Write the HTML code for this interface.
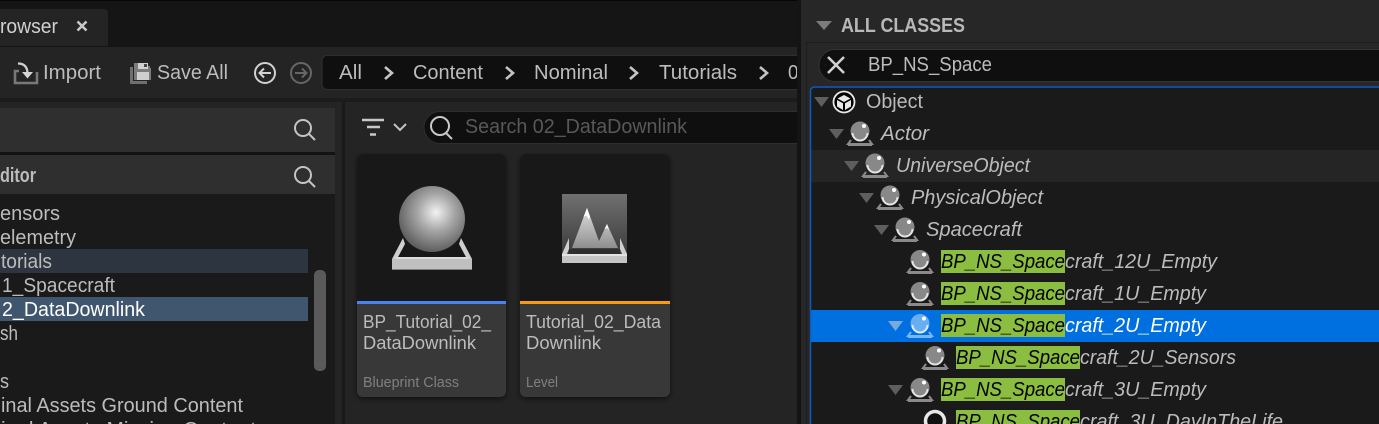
<!DOCTYPE html>
<html lang="en">
<head>
<meta charset="utf-8">
<title>Content Browser</title>
<style>
html,body{margin:0;padding:0;width:1379px;height:424px;overflow:hidden;background:#151515}
svg{display:block}
text{font-family:"Liberation Sans",sans-serif;font-size:20px;fill:#bcbcbc;white-space:pre}
.i{font-style:italic}
.b{font-weight:bold}
</style>
</head>
<body>
<svg width="1379" height="424" viewBox="0 0 1379 424" xmlns="http://www.w3.org/2000/svg">
<defs>
<linearGradient id="tl" x1="0" x2="1" y1="0" y2="0"><stop offset="0" stop-color="#0a62c8"/><stop offset="1" stop-color="#2a2a2a"/></linearGradient>
<radialGradient id="sph" cx="0.56" cy="0.4" r="0.62"><stop offset="0" stop-color="#f2f2f2"/><stop offset="0.45" stop-color="#a6a6a6"/><stop offset="1" stop-color="#5a5a5a"/></radialGradient>
<linearGradient id="lv" x1="0" x2="0" y1="0" y2="1"><stop offset="0" stop-color="#707070"/><stop offset="1" stop-color="#3c3c3c"/></linearGradient>
<linearGradient id="mt" x1="0" x2="0" y1="0" y2="1"><stop offset="0" stop-color="#e0e0e0"/><stop offset="1" stop-color="#8e8e8e"/></linearGradient>
<filter id="sh" x="-10%" y="-10%" width="120%" height="120%"><feDropShadow dx="0" dy="2" stdDeviation="3" flood-color="#000" flood-opacity="0.55"/></filter>
</defs>

<!-- base -->
<rect width="1379" height="424" fill="#151515"/>
<rect width="800" height="1" fill="#050505"/>

<!-- tab -->
<path d="M0 9H104a4 4 0 0 1 4 4V46H0Z" fill="#242424"/>
<path d="M0 9.500H104" stroke="url(#tl)" stroke-width="1" fill="none"/>
<text x="0" y="33" textLength="58" lengthAdjust="spacingAndGlyphs" style="fill:#d0d0d0">rowser</text>
<path d="M77.500 21.500l9 9M86.500 21.500l-9 9" stroke="#c8c8c8" stroke-width="2.600" fill="none"/>

<!-- toolbar and content backdrop -->
<rect x="0" y="47" width="798" height="377" fill="#242424"/>
<rect x="0" y="98" width="798" height="4" fill="#1c1c1c"/>

<!-- import -->
<path d="M19 71h-4v12h22V72" stroke="#787878" stroke-width="2.600" fill="none"/>
<path d="M18 63.500c6 0 9 3 9.500 9" stroke="#d0d0d0" stroke-width="2.200" fill="none"/>
<path d="M22 72h11l-5.500 6.500z" fill="#d4d4d4"/>
<text x="43" y="79" textLength="58" lengthAdjust="spacingAndGlyphs">Import</text>

<!-- save all -->
<path d="M130 67h3v14h14v3h-17z" fill="#6f6f6f"/>
<path d="M134 63h13v3h3v2h1v12h-17z" fill="#7c7c7c"/>
<rect x="138" y="63" width="10" height="6" fill="#cfcfcf"/>
<rect x="137" y="72" width="12" height="8" fill="#cfcfcf"/>
<rect x="144" y="64" width="3" height="3" fill="#444"/>
<text x="157" y="79" textLength="71" lengthAdjust="spacingAndGlyphs">Save All</text>

<!-- nav -->
<circle cx="265" cy="73" r="10" fill="none" stroke="#d2d2d2" stroke-width="2"/>
<path d="M271 73h-11M264 68.500L259.500 73l4.500 4.500" fill="none" stroke="#d2d2d2" stroke-width="2"/>
<circle cx="301" cy="73" r="10" fill="none" stroke="#666" stroke-width="2"/>
<path d="M295 73h11M302 68.500L306.500 73l-4.500 4.500" fill="none" stroke="#666" stroke-width="2"/>

<!-- breadcrumb -->
<rect x="322" y="55.500" width="490" height="34" rx="5" fill="#0f0f0f" stroke="#2f2f2f"/>
<text x="339" y="79" textLength="23" lengthAdjust="spacingAndGlyphs">All</text>
<path d="M385 67l7 6-7 6" fill="none" stroke="#c4c4c4" stroke-width="2.600"/>
<text x="413" y="79" textLength="70" lengthAdjust="spacingAndGlyphs">Content</text>
<path d="M506 67l7 6-7 6" fill="none" stroke="#c4c4c4" stroke-width="2.600"/>
<text x="534" y="79" textLength="74" lengthAdjust="spacingAndGlyphs">Nominal</text>
<path d="M630 67l7 6-7 6" fill="none" stroke="#c4c4c4" stroke-width="2.600"/>
<text x="659" y="79" textLength="78" lengthAdjust="spacingAndGlyphs">Tutorials</text>
<path d="M760 67l7 6-7 6" fill="none" stroke="#c4c4c4" stroke-width="2.600"/>
<text x="788" y="79" textLength="21" lengthAdjust="spacingAndGlyphs">02</text>

<!-- left sources panel -->
<rect x="0" y="108" width="335" height="44" fill="#2f2f2f"/>
<rect x="0" y="152" width="335" height="3" fill="#131313"/>
<rect x="0" y="155" width="335" height="39" fill="#2f2f2f"/>
<rect x="0" y="194" width="335" height="230" fill="#1a1a1a"/>
<rect x="342" y="102" width="3" height="322" fill="#191919"/>
<g fill="none" stroke="#c4c4c4" stroke-width="2"><circle cx="303" cy="128" r="8"/><path d="M309 134l6 6"/><circle cx="303" cy="175" r="8"/><path d="M309 181l6 6"/></g>
<text x="0" y="182" textLength="36" lengthAdjust="spacingAndGlyphs" class="b">ditor</text>
<rect x="0" y="249" width="308" height="24" fill="#2d3640"/>
<rect x="0" y="297" width="308" height="24" fill="#40566e"/>
<rect x="314" y="270" width="12" height="101" rx="5" fill="#5a5a5a"/>
<text x="0" y="220" textLength="60" lengthAdjust="spacingAndGlyphs">ensors</text>
<text x="0" y="244" textLength="76" lengthAdjust="spacingAndGlyphs">elemetry</text>
<text x="1" y="268" textLength="51" lengthAdjust="spacingAndGlyphs">torials</text>
<text x="2" y="292" textLength="113" lengthAdjust="spacingAndGlyphs">1_Spacecraft</text>
<text x="2" y="316" textLength="143" lengthAdjust="spacingAndGlyphs" style="fill:#fff">2_DataDownlink</text>
<text x="0" y="340" textLength="18" lengthAdjust="spacingAndGlyphs">sh</text>
<text x="0" y="388" textLength="9" lengthAdjust="spacingAndGlyphs">s</text>
<text x="1" y="412" textLength="242" lengthAdjust="spacingAndGlyphs">inal Assets Ground Content</text>
<text x="1" y="436" textLength="255" lengthAdjust="spacingAndGlyphs">inal Assets Mission Content</text>

<!-- filter + search -->
<path d="M362 120h22M367 127h13M370 134.500h6" stroke="#c8c8c8" stroke-width="2.500" fill="none"/>
<path d="M394 124l6 6 6-6" stroke="#c4c4c4" stroke-width="2" fill="none"/>
<rect x="424" y="111.500" width="390" height="32" rx="16" fill="#0f0f0f" stroke="#2f2f2f"/>
<circle cx="440" cy="126" r="9" fill="none" stroke="#c8c8c8" stroke-width="2"/>
<path d="M446 133l6 6" stroke="#c8c8c8" stroke-width="2"/>
<text x="465" y="133" textLength="222" lengthAdjust="spacingAndGlyphs" style="fill:#585858">Search 02_DataDownlink</text>

<!-- card 1 -->
<g filter="url(#sh)"><rect x="357" y="154" width="149" height="243" rx="6" fill="#383838"/></g>
<path d="M357 160a6 6 0 0 1 6-6h137a6 6 0 0 1 6 6V301H357Z" fill="#181818"/>
<rect x="357" y="301" width="149" height="3" fill="#4a82f0"/>
<path d="M403 238L392 259h5l8-15z" fill="#cfcfcf"/>
<path d="M461 238L472 259h-5l-8-15z" fill="#cfcfcf"/>
<rect x="396" y="257" width="72" height="2" fill="#dcdcdc"/>
<rect x="392" y="259" width="80" height="10" fill="#c0c0c0"/>
<rect x="392" y="269" width="80" height="1" fill="#808080"/>
<circle cx="432" cy="219" r="33" fill="url(#sph)"/>
<text x="363" y="328" textLength="128" lengthAdjust="spacingAndGlyphs" style="font-size:18px">BP_Tutorial_02_</text>
<text x="363" y="349" textLength="113" lengthAdjust="spacingAndGlyphs" style="font-size:18px">DataDownlink</text>
<text x="363" y="387" textLength="96" lengthAdjust="spacingAndGlyphs" style="font-size:15px;fill:#808080">Blueprint Class</text>

<!-- card 2 -->
<g filter="url(#sh)"><rect x="520" y="154" width="150" height="243" rx="6" fill="#383838"/></g>
<path d="M520 160a6 6 0 0 1 6-6h138a6 6 0 0 1 6 6V301H520Z" fill="#181818"/>
<rect x="520" y="301" width="150" height="3" fill="#f59c10"/>
<rect x="562" y="194" width="65" height="60" fill="url(#lv)"/>
<path d="M572 248L587 208L599 241L607 224L618 248Z" fill="url(#mt)"/>
<path d="M587 208l-3.500 9 3-1.500 2.500 4 1-3z" fill="#fff"/>
<path d="M607 224l-2.500 5 2.500-1 2 2z" fill="#fff"/>
<rect x="569" y="249" width="51" height="5" fill="#2e2e2e"/>
<path d="M562 254L569 238v11l-2 5zM627 254L620 238v11l2 5z" fill="#cfcfcf"/>
<rect x="562" y="254" width="65" height="2" fill="#e2e2e2"/>
<rect x="562" y="256" width="65" height="7" fill="#c4c4c4"/>
<text x="526" y="328" textLength="135" lengthAdjust="spacingAndGlyphs" style="font-size:18px">Tutorial_02_Data</text>
<text x="526" y="349" textLength="75" lengthAdjust="spacingAndGlyphs" style="font-size:18px">Downlink</text>
<text x="526" y="387" textLength="32" lengthAdjust="spacingAndGlyphs" style="font-size:15px;fill:#808080">Level</text>

<!-- divider + right panel -->
<rect x="797" y="0" width="4" height="424" fill="#141414"/>
<rect x="801" y="0" width="578" height="424" fill="#272727"/>
<rect x="806" y="42" width="573" height="1" fill="#1d1d1d"/>
<rect x="806" y="42" width="1" height="382" fill="#1d1d1d"/>
<path d="M816 21h16l-8 9z" fill="#7c7c7c"/>
<text x="841" y="32" textLength="124" lengthAdjust="spacingAndGlyphs" class="b" style="fill:#b8b8b8">ALL CLASSES</text>

<!-- class search -->
<rect x="819" y="49.500" width="580" height="32" rx="16" fill="#0f0f0f" stroke="#333"/>
<path d="M828 57l16 16M844 57l-16 16" stroke="#d0d0d0" stroke-width="2.600" fill="none"/>
<text x="868" y="71" textLength="124" lengthAdjust="spacingAndGlyphs">BP_NS_Space</text>

<!-- tree -->
<path d="M810.500 424V91a4 4 0 0 1 4-4H1379V424Z" fill="#1a1a1a"/>
<rect x="811" y="150" width="568" height="32" fill="#252525"/>
<rect x="811" y="310" width="568" height="32" fill="#0070e0"/>
<path d="M810.500 424V91a4 4 0 0 1 4-4H1379" fill="none" stroke="#0a5cc0" stroke-width="1.500"/>

<!-- triangles -->
<g fill="#5e5e5e">
<path d="M814 97h15l-7.500 10z"/>
<path d="M829 129h15l-7.500 10z"/>
<path d="M844 161h15l-7.500 10z"/>
<path d="M859 193h15l-7.500 10z"/>
<path d="M874 225h15l-7.500 10z"/>
<path d="M888 385h15l-7.500 10z"/>
</g>
<path d="M888 321h15l-7.500 10z" fill="#7aa9e0"/>

<!-- Object icon -->
<circle cx="844" cy="102" r="10.500" fill="#000" stroke="#e8e8e8" stroke-width="1.800"/>
<path d="M844 95l6.500 3.500-6.500 3.500-6.500-3.500z" fill="#e8e8e8"/>
<path d="M837 100l6 3.300V110l-6-3.500zM851 100l-6 3.300V110l6-3.500z" fill="#e8e8e8"/>
<text x="866" y="108" textLength="57" lengthAdjust="spacingAndGlyphs">Object</text>

<!-- Actor -->
<g><path d="M851 140l-3 4h24l-3-4" fill="none" stroke="#8a8a8a" stroke-width="2"/><rect x="848" y="143" width="24" height="3" fill="#8a8a8a"/><circle cx="860" cy="131" r="9.500" fill="#888"/><path d="M852.500 133a7.500 7.500 0 0 0 15 0" fill="none" stroke="#e4e4e4" stroke-width="2"/><circle cx="864" cy="126" r="2" fill="#fff"/></g>
<text x="881" y="140" textLength="48" lengthAdjust="spacingAndGlyphs" class="i">Actor</text>

<!-- UniverseObject -->
<g><path d="M866 172l-3 4h24l-3-4" fill="none" stroke="#8a8a8a" stroke-width="2"/><rect x="863" y="175" width="24" height="3" fill="#8a8a8a"/><circle cx="875" cy="163" r="9.500" fill="#888"/><path d="M867.500 165a7.500 7.500 0 0 0 15 0" fill="none" stroke="#e4e4e4" stroke-width="2"/><circle cx="879" cy="158" r="2" fill="#fff"/></g>
<text x="896" y="172" textLength="134" lengthAdjust="spacingAndGlyphs" class="i">UniverseObject</text>

<!-- PhysicalObject -->
<g><path d="M881 204l-3 4h24l-3-4" fill="none" stroke="#8a8a8a" stroke-width="2"/><rect x="878" y="207" width="24" height="3" fill="#8a8a8a"/><circle cx="890" cy="195" r="9.500" fill="#888"/><path d="M882.500 197a7.500 7.500 0 0 0 15 0" fill="none" stroke="#e4e4e4" stroke-width="2"/><circle cx="894" cy="190" r="2" fill="#fff"/></g>
<text x="911" y="204" textLength="132" lengthAdjust="spacingAndGlyphs" class="i">PhysicalObject</text>

<!-- Spacecraft -->
<g><path d="M896 236l-3 4h24l-3-4" fill="none" stroke="#8a8a8a" stroke-width="2"/><rect x="893" y="239" width="24" height="3" fill="#8a8a8a"/><circle cx="905" cy="227" r="9.500" fill="#888"/><path d="M897.500 229a7.500 7.500 0 0 0 15 0" fill="none" stroke="#e4e4e4" stroke-width="2"/><circle cx="909" cy="222" r="2" fill="#fff"/></g>
<text x="926" y="236" textLength="96" lengthAdjust="spacingAndGlyphs" class="i">Spacecraft</text>

<!-- 12U -->
<g><path d="M911 268l-3 4h24l-3-4" fill="none" stroke="#8a8a8a" stroke-width="2"/><rect x="908" y="271" width="24" height="3" fill="#8a8a8a"/><circle cx="920" cy="259.500" r="9.500" fill="#888"/><path d="M912.500 261a7.500 7.500 0 0 0 15 0" fill="none" stroke="#e4e4e4" stroke-width="2"/><circle cx="924" cy="254.500" r="2" fill="#fff"/></g>
<rect x="941" y="250" width="124" height="23" fill="#8abd40"/>
<text x="941" y="268" textLength="124" lengthAdjust="spacingAndGlyphs" class="i" style="fill:#000">BP_NS_Space</text>
<text x="1065" y="268" textLength="152" lengthAdjust="spacingAndGlyphs" class="i">craft_12U_Empty</text>

<!-- 1U -->
<g><path d="M911 300l-3 4h24l-3-4" fill="none" stroke="#8a8a8a" stroke-width="2"/><rect x="908" y="303" width="24" height="3" fill="#8a8a8a"/><circle cx="920" cy="291.500" r="9.500" fill="#888"/><path d="M912.500 293a7.500 7.500 0 0 0 15 0" fill="none" stroke="#e4e4e4" stroke-width="2"/><circle cx="924" cy="286.500" r="2" fill="#fff"/></g>
<rect x="941" y="282" width="124" height="23" fill="#8abd40"/>
<text x="941" y="300" textLength="124" lengthAdjust="spacingAndGlyphs" class="i" style="fill:#000">BP_NS_Space</text>
<text x="1065" y="300" textLength="141" lengthAdjust="spacingAndGlyphs" class="i">craft_1U_Empty</text>

<!-- 2U selected -->
<g><path d="M911 332l-3 4h24l-3-4" fill="none" stroke="#7ab8f5" stroke-width="2"/><rect x="908" y="335" width="24" height="3" fill="#7ab8f5"/><circle cx="920" cy="323.500" r="9.500" fill="#6aaef2"/><path d="M912.500 325a7.500 7.500 0 0 0 15 0" fill="none" stroke="#d8ecff" stroke-width="2"/><circle cx="924" cy="318.500" r="2" fill="#fff"/></g>
<rect x="941" y="314" width="124" height="23" fill="#8abd40"/>
<text x="941" y="332" textLength="124" lengthAdjust="spacingAndGlyphs" class="i" style="fill:#000">BP_NS_Space</text>
<text x="1065" y="332" textLength="141" lengthAdjust="spacingAndGlyphs" class="i" style="fill:#fff">craft_2U_Empty</text>

<!-- 2U sensors -->
<g><path d="M926 364l-3 4h24l-3-4" fill="none" stroke="#8a8a8a" stroke-width="2"/><rect x="923" y="367" width="24" height="3" fill="#8a8a8a"/><circle cx="935" cy="355.500" r="9.500" fill="#888"/><path d="M927.500 357a7.500 7.500 0 0 0 15 0" fill="none" stroke="#e4e4e4" stroke-width="2"/><circle cx="939" cy="350.500" r="2" fill="#fff"/></g>
<rect x="956" y="346" width="124" height="23" fill="#8abd40"/>
<text x="956" y="364" textLength="124" lengthAdjust="spacingAndGlyphs" class="i" style="fill:#000">BP_NS_Space</text>
<text x="1080" y="364" textLength="156" lengthAdjust="spacingAndGlyphs" class="i">craft_2U_Sensors</text>

<!-- 3U -->
<g><path d="M911 396l-3 4h24l-3-4" fill="none" stroke="#8a8a8a" stroke-width="2"/><rect x="908" y="399" width="24" height="3" fill="#8a8a8a"/><circle cx="920" cy="387.500" r="9.500" fill="#888"/><path d="M912.500 389a7.500 7.500 0 0 0 15 0" fill="none" stroke="#e4e4e4" stroke-width="2"/><circle cx="924" cy="382.500" r="2" fill="#fff"/></g>
<rect x="941" y="378" width="124" height="23" fill="#8abd40"/>
<text x="941" y="396" textLength="124" lengthAdjust="spacingAndGlyphs" class="i" style="fill:#000">BP_NS_Space</text>
<text x="1065" y="396" textLength="141" lengthAdjust="spacingAndGlyphs" class="i">craft_3U_Empty</text>

<!-- 3U DayInTheLife -->
<circle cx="935" cy="421" r="9.500" fill="#111" stroke="#e8e8e8" stroke-width="3.500"/>
<rect x="956" y="410" width="124" height="14" fill="#8abd40"/>
<text x="956" y="428" textLength="124" lengthAdjust="spacingAndGlyphs" class="i" style="fill:#000">BP_NS_Space</text>
<text x="1080" y="428" textLength="203" lengthAdjust="spacingAndGlyphs" class="i">craft_3U_DayInTheLife</text>
</svg>
</body>
</html>
